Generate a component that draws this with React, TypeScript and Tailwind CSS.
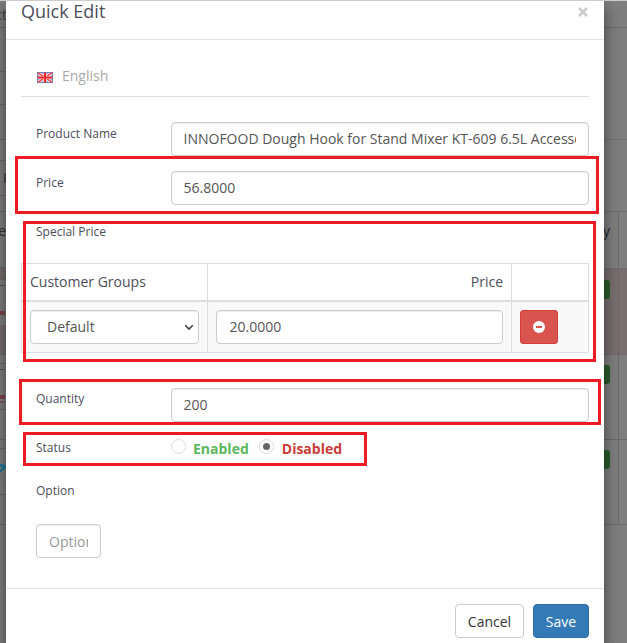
import type { ReactNode } from 'react'

const inputClass =
  'h-[34px] w-full overflow-hidden rounded border border-[#ccc] bg-white pr-3 text-[14px] leading-[30px] text-[#555] shadow-[inset_0_1px_1px_rgba(0,0,0,0.075)] outline-none placeholder:text-[#999]'

function LeftEdge() {
  return (
    <div className="w-[6px] overflow-hidden bg-[#7f7f7f] text-[14px] whitespace-nowrap text-[#333]">
      <div className="flex h-[28px] justify-end border-b border-[#6a6a6a] pt-[5px] leading-[20px] text-[#444]">
        <span className="-mr-px">ct</span>
      </div>
      <div className="h-[44px] border-b border-[#6a6a6a]" />
      <div className="h-[33px] border-b border-[#6a6a6a]" />
      <div className="h-[35px] border-b border-[#6a6a6a]" />
      <div className="h-[21px] border-b border-[#6a6a6a]" />
      <div className="h-[35px] border-b border-[#6a6a6a] pl-[3px] leading-[34px]">I</div>
      <div className="h-[16px] border-b border-[#6a6a6a]" />
      <div className="flex h-[57px] justify-end border-b-2 border-[#6e6e6e] leading-[37px]">e</div>
      <div className="h-[10px] bg-[#786f6f]" />
      <div className="h-[46px] border-t border-[#6a6a6a] pt-[5px]">
        <div className="h-px w-[5px] bg-[#555]" />
        <div className="mt-[25px] h-[4px] w-[5px] bg-[#7c2b32]/70" />
      </div>
      <div className="h-[30px] border-b border-[#6a6a6a] bg-[#786f6f]" />
      <div className="h-[9px] border-b border-[#6a6a6a]" />
      <div className="h-[46px] border-b border-[#6a6a6a] pt-[5px]">
        <div className="h-px w-[5px] bg-[#555]" />
        <div className="mt-[25px] h-[4px] w-[5px] bg-[#7c2b32]/70" />
        <div className="mt-[2px] h-[2px] w-[5px] bg-[#75484b]/60" />
      </div>
      <div className="h-[30px] border-b border-[#6a6a6a]" />
      <div className="h-[9px] border-b border-[#6a6a6a]" />
      <div className="h-[46px] border-b border-[#6a6a6a] pt-[15px]">
        <svg width="6" height="9" viewBox="0 0 6 9">
          <path d="M0 0C3 .2 6 .6 6 2.500S3 6.500 0 8.500V6l3-3L0 2.500Z" fill="#18789a" />
        </svg>
      </div>
      <div className="h-[30px] border-b border-[#6a6a6a]" />
    </div>
  )
}

function ListRow({ className }: { className: string }) {
  return (
    <div className={className}>
      <div className="w-[15px] border-r border-[#6a6a6a] pt-[10px]">
        <div className="h-[19px] w-[6px] rounded-r-[3px] bg-[#2b5c2b]" />
      </div>
    </div>
  )
}

function RightEdge() {
  return (
    <div className="w-[23px] overflow-hidden bg-[#7f7f7f] text-[14px] text-[#222b33]">
      <div className="h-[28px] border-b border-[#6a6a6a]" />
      <div className="h-[112px] border-b border-[#737373]" />
      <div className="h-[72px] border-b border-[#6f6f6f]" />
      <div className="flex h-[58px] border-b-2 border-[#6f6f6f]">
        <div className="w-[15px] border-r border-[#6a6a6a] leading-[37px]">
          <div className="-ml-[1px]">y</div>
        </div>
      </div>
      <ListRow className="flex h-[85px] border-b border-[#6a6a6a] bg-[#796f6f]" />
      <ListRow className="flex h-[85px] border-b border-[#6a6a6a]" />
      <ListRow className="flex h-[85px] border-b border-[#6a6a6a]" />
    </div>
  )
}

function FlagIcon() {
  return (
    <svg width="16" height="11" viewBox="0 0 16 11" className="shrink-0">
      <path d="M0 0h16v11H0z" fill="#9aa5dc" />
      <path d="m0 0 16 11M16 0 0 11" stroke="#fff" strokeWidth="3" />
      <path d="m0 0 16 11M16 0 0 11" stroke="#f04a4a" strokeWidth="1.600" />
      <path d="M8 0v11M0 5.500h16" stroke="#fbd0d0" strokeWidth="3.200" />
      <path d="M8 0v11M0 5.500h16" stroke="#f0282c" strokeWidth="2" />
      <path d="M.5.500h15v10H.5z" fill="none" stroke="#5366aa" strokeOpacity=".6" />
    </svg>
  )
}

interface FormRowProps {
  label: string
  value: string
  labelClass?: string
}

function FormRow({ label, value, labelClass = 'pt-[3px]' }: FormRowProps) {
  return (
    <div className="flex h-[49px] pl-[15px]">
      <div className={`w-[135px] shrink-0 text-[12px] leading-[17px] ${labelClass}`}>{label}</div>
      <input className={`${inputClass} pb-[2px] pl-[11.5px]`} defaultValue={value} />
    </div>
  )
}

function Radio({ checked, children }: { checked?: boolean; children: ReactNode }) {
  return (
    <label className="flex items-start">
      <span className="flex h-[15px] w-[15px] items-center justify-center rounded-full border border-[#dcdcdc]">
        {checked && <span className="h-[7px] w-[7px] rounded-full bg-[#666]" />}
      </span>
      {children}
    </label>
  )
}

function SpecialPriceTable() {
  return (
    <div className="grid h-[90px] grid-cols-[186px_304px_77px] grid-rows-[37px_51px] border-t border-l border-[#ddd] text-[14px]">
      <div className="border-r border-b border-[#ddd] pl-2 leading-[35px]">Customer Groups</div>
      <div className="border-r border-b border-[#ddd] pr-2 text-right leading-[35px]">Price</div>
      <div className="border-r border-b border-[#ddd]" />
      <div className="h-[52px] border-t border-r border-b border-[#ddd] bg-[#f9f9f9] px-2 pt-2">
        <div className="flex h-[34px] w-[169px] items-center justify-between rounded border border-[#ccc] bg-white pr-1 pl-4 text-[#555] shadow-[inset_0_1px_1px_rgba(0,0,0,0.075)]">
          <span className="pb-[2px]">Default</span>
          <svg width="10" height="10" viewBox="0 0 10 10" fill="none" stroke="#444" strokeWidth="1.600">
            <path d="m1.200 3.200 3.800 3.800 3.800-3.800" />
          </svg>
        </div>
      </div>
      <div className="h-[52px] border-t border-r border-b border-[#ddd] bg-[#f9f9f9] px-2 pt-2">
        <input className={`${inputClass} pb-[2px] pl-[12.5px]`} defaultValue="20.0000" />
      </div>
      <div className="h-[52px] border-t border-r border-b border-[#ddd] bg-[#f9f9f9] px-2 pt-2">
        <button className="flex h-[34px] w-[38px] items-center justify-center rounded-[3px] border border-[#d43f3a] bg-[#d9534f]">
          <svg width="12" height="12" viewBox="0 0 12 12">
            <circle cx="6" cy="6" r="6" fill="#fff" />
            <path d="M3 5h6v2H3z" fill="#d9534f" />
          </svg>
        </button>
      </div>
    </div>
  )
}

function QuickEdit() {
  return (
    <div className="z-10 h-[648px] w-[598px] bg-white shadow-[0_5px_15px_rgba(0,0,0,0.5)]">
      <div className="flex h-[39px] justify-between border-b border-[#e5e5e5] pr-[15px] pl-[15px]">
        <h4 className="-mt-[2px] text-[18px] leading-[24px]">Quick Edit</h4>
        <svg width="12" height="12" viewBox="0 0 12 12" className="mt-[5px]" stroke="#ccc" strokeWidth="2.700">
          <path d="m2 2 8 8M10 2l-8 8" />
        </svg>
      </div>

      <div className="h-[549px] border-b border-[#e5e5e5] px-[15px] pt-[15px]">
        <div className="mb-[25px] flex h-[42px] items-center gap-[9px] border-b border-[#ddd] pl-4 text-[14px] text-[#aaa]">
          <div className="pt-[3px]">
            <FlagIcon />
          </div>
          <span>English</span>
        </div>

        <FormRow label="Product Name" value="INNOFOOD Dough Hook for Stand Mixer KT-609 6.5L Accessories" />
        <FormRow label="Price" value="56.8000" />
        <div className="h-[43px] pt-[3px] pl-[15px] text-[12px] leading-[17px]">Special Price</div>

        <SpecialPriceTable />

        <div className="mt-[35px]">
          <FormRow label="Quantity" value="200" labelClass="pt-[2px]" />
        </div>
        <div className="flex h-[43px] pl-[15px]">
          <div className="w-[135px] shrink-0 pt-[2px] text-[12px] leading-[17px]">Status</div>
          <div className="flex gap-[10px] pt-[2px] text-[14px] leading-[20px] font-bold">
            <Radio>
              <span className="ml-[7px] text-[#5cb85c]">Enabled</span>
            </Radio>
            <Radio checked>
              <span className="ml-[8px] text-[#c83c38]">Disabled</span>
            </Radio>
          </div>
        </div>
        <div className="pl-[15px]">
          <div className="h-[44px] pt-[2px] text-[12px] leading-[17px]">Option</div>
          <div className="w-[65px]">
            <input className={`${inputClass} pl-3`} placeholder="Option" />
          </div>
        </div>
      </div>

      <div className="flex justify-end gap-[9px] p-[15px] text-[14px]">
        <button className="h-[34px] w-[69px] rounded border border-[#ccc] bg-white text-[#333]">Cancel</button>
        <button className="h-[34px] w-[56px] rounded border border-[#2e6da4] bg-[#337ab7] text-white">Save</button>
      </div>
    </div>
  )
}

export default function App() {
  return (
    <div className="relative h-[643px] w-[627px] overflow-hidden bg-[#7f7f7f] font-['Open_Sans','Noto_Sans',sans-serif] text-[#4c4d5a]">
      <div className="flex h-[643px]">
        <LeftEdge />
        <div className="flex pt-px">
          <QuickEdit />
        </div>
        <RightEdge />
      </div>
      <div className="absolute top-0 left-0 z-20 h-px w-full bg-[#ccc]" />

      {/* red markers over the form */}
      <div className="absolute top-[156px] left-[15px] z-20 h-[58px] w-[584px] border-[3px] border-[#ed1c24]" />
      <div className="absolute top-[221px] left-[23px] z-20 h-[141px] w-[573px] border-[3px] border-[#ed1c24]" />
      <div className="absolute top-[379px] left-[19px] z-20 h-[46px] w-[582px] border-[3px] border-[#ed1c24]" />
      <div className="absolute top-[432px] left-[23px] z-20 h-[34px] w-[344px] border-[3px] border-[#ed1c24]" />
    </div>
  )
}
